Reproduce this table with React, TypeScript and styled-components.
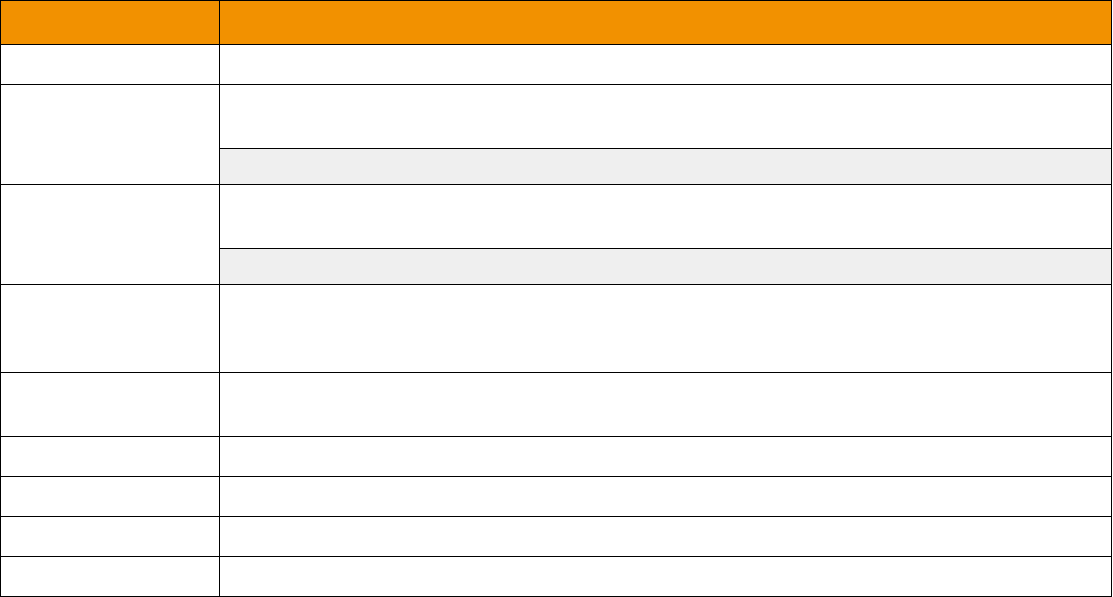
import React from "react";
import styled, { createGlobalStyle } from "styled-components";

const GlobalStyle = createGlobalStyle`
    body {
        margin: 0;
        background: #ffffff;
        font-family: "Liberation Sans", Arial, sans-serif;
    }
`;

const Table = styled.div`
    width: 1112px;
    border-top: 1px solid #000;
    border-left: 1px solid #000;
    box-sizing: border-box;
    display: flex;
    flex-direction: column;
`;

const Row = styled.div`
    display: flex;
`;

const LabelCell = styled.div<{ $h: number; $head?: boolean }>`
    width: 219px;
    height: ${props => props.$h}px;
    box-sizing: border-box;
    border-right: 1px solid #000;
    border-bottom: 1px solid #000;
    background-color: ${props => (props.$head ? "#f29100" : "#ffffff")};
    flex-shrink: 0;
`;

const ValueColumn = styled.div`
    width: 892px;
    display: flex;
    flex-direction: column;
`;

const ValueCell = styled.div<{ $h: number; $head?: boolean; $shade?: boolean }>`
    height: ${props => props.$h}px;
    box-sizing: border-box;
    border-right: 1px solid #000;
    border-bottom: 1px solid #000;
    background-color: ${props =>
        props.$head ? "#f29100" : props.$shade ? "#efefef" : "#ffffff"};
`;

interface IRow {
    parts: { h: number; shade?: boolean }[];
}

const rows: IRow[] = [
    { parts: [{ h: 40 }] },
    { parts: [{ h: 64 }, { h: 36, shade: true }] },
    { parts: [{ h: 64 }, { h: 36, shade: true }] },
    { parts: [{ h: 88 }] },
    { parts: [{ h: 64 }] },
    { parts: [{ h: 40 }] },
    { parts: [{ h: 40 }] },
    { parts: [{ h: 40 }] },
    { parts: [{ h: 40 }] },
];

export default function App() {
    return (
        <>
            <GlobalStyle />
            <Table>
                <Row>
                    <LabelCell $h={44} $head />
                    <ValueColumn>
                        <ValueCell $h={44} $head />
                    </ValueColumn>
                </Row>
                {rows.map((row, i) => {
                    const total = row.parts.reduce((sum, p) => sum + p.h, 0);
                    return (
                        <Row key={i}>
                            <LabelCell $h={total} />
                            <ValueColumn>
                                {row.parts.map((p, j) => (
                                    <ValueCell key={j} $h={p.h} $shade={p.shade} />
                                ))}
                            </ValueColumn>
                        </Row>
                    );
                })}
            </Table>
        </>
    );
}
